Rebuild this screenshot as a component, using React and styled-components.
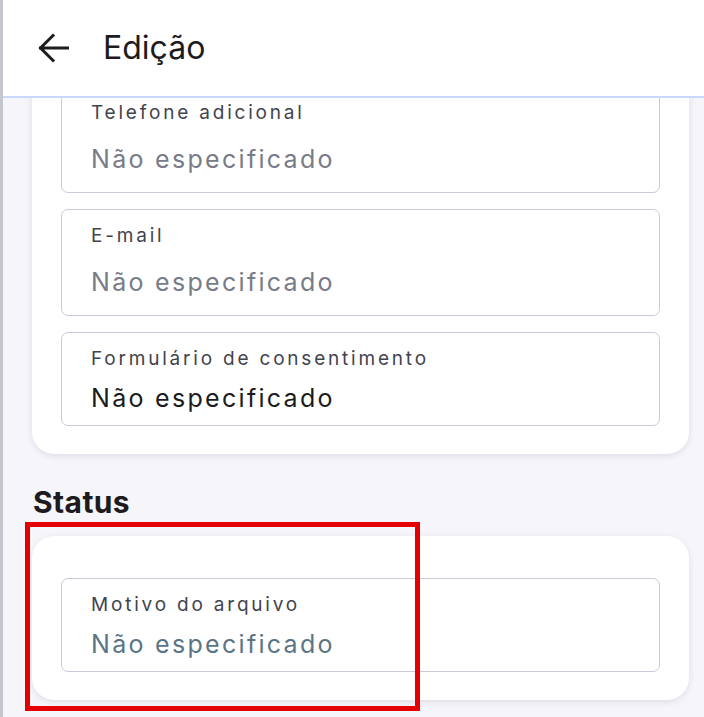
import React from "react";
import styled, { createGlobalStyle } from "styled-components";

const Global = createGlobalStyle`
  html, body { margin: 0; padding: 0; }
  body { font-family: Inter, "Noto Sans", sans-serif; background: #f6f5fa; }
`;

const Screen = styled.div`
  position: relative;
  width: 704px;
  height: 717px;
  box-sizing: border-box;
  border-left: 3px solid #c5c5cd;
  display: flex;
  flex-direction: column;
  overflow: hidden;
  background: #f6f5fa;
`;

const TopBar = styled.header`
  position: relative;
  z-index: 2;
  flex: none;
  height: 96px;
  background: #ffffff;
  border-bottom: 2px solid #c9d8fa;
  display: flex;
  align-items: center;
  gap: 33px;
  padding-left: 33px;
`;

const BackButton = styled.button`
  border: 0;
  background: none;
  padding: 0;
  width: 34px;
  height: 34px;
  display: flex;
  align-items: center;
  justify-content: center;
  color: #1d1b20;
  cursor: pointer;
`;

const Title = styled.h1`
  margin: 0;
  font-size: 32px;
  font-weight: 400;
  line-height: 40px;
  color: #1d1b20;
`;

const Body = styled.main`
  flex: 1;
  overflow: hidden;
  padding: 0 15px 0 29px;
`;

const Column = styled.div`
  display: flex;
  flex-direction: column;
  margin-top: ${(p) => p.$scroll}px;
`;

const Card = styled.section`
  background: #ffffff;
  border-radius: 22px;
  box-shadow: 0 2px 6px rgba(60, 60, 90, 0.12);
  padding: ${(p) => p.$padTop}px 29px 28px 29px;
  display: flex;
  flex-direction: column;
  gap: 16px;
`;

const SectionTitle = styled.h2`
  margin: 30px 0 16px 1px;
  font-size: 30px;
  font-weight: 700;
  line-height: 36px;
  letter-spacing: 0.4px;
  color: #1d1b20;
`;

const Field = styled.div`
  border: 1px solid #c9cbd9;
  border-radius: 7px;
  padding: 14px 29px ${(p) => (p.$input ? 18 : 12)}px 29px;
  display: flex;
  flex-direction: column;
  gap: ${(p) => (p.$input ? 20 : 13)}px;
`;

const Label = styled.span`
  font-size: 19px;
  line-height: 23px;
  letter-spacing: 2.8px;
  color: #42444d;
  white-space: nowrap;
`;

const tones = {
  placeholder: "#787b88",
  text: "#1b1b20",
  muted: "#5a7585",
};

const Value = styled.span`
  font-size: 25px;
  line-height: 30px;
  letter-spacing: 2.3px;
  color: ${(p) => tones[p.$tone]};
  white-space: nowrap;
`;

const Highlight = styled.div`
  position: absolute;
  left: 22px;
  top: 522px;
  width: 395px;
  height: 189px;
  box-sizing: border-box;
  border: 5px solid #e40000;
  pointer-events: none;
  z-index: 3;
`;

function Arrow() {
  return (
    <svg width="32" height="30" viewBox="0 0 32 30" fill="none">
      <path
        d="M31 15H3.5M16 2.5L3.5 15L16 27.5"
        stroke="currentColor"
        strokeWidth="3"
        strokeLinecap="square"
      />
    </svg>
  );
}

function InfoField({ label, value, tone, input }) {
  return (
    <Field $input={input}>
      <Label>{label}</Label>
      <Value $tone={tone}>{value}</Value>
    </Field>
  );
}

export default function App() {
  return (
    <>
      <Global />
      <Screen>
        <TopBar>
          <BackButton aria-label="Voltar">
            <Arrow />
          </BackButton>
          <Title>Edição</Title>
        </TopBar>
        <Body>
          <Column $scroll={-41}>
            <Card $padTop={29}>
              <InfoField label="Telefone adicional" value="Não especificado" tone="placeholder" input />
              <InfoField label="E-mail" value="Não especificado" tone="placeholder" input />
              <InfoField label="Formulário de consentimento" value="Não especificado" tone="text" />
            </Card>
            <SectionTitle>Status</SectionTitle>
            <Card $padTop={42}>
              <InfoField label="Motivo do arquivo" value="Não especificado" tone="muted" />
            </Card>
          </Column>
        </Body>
        <Highlight />
      </Screen>
    </>
  );
}
